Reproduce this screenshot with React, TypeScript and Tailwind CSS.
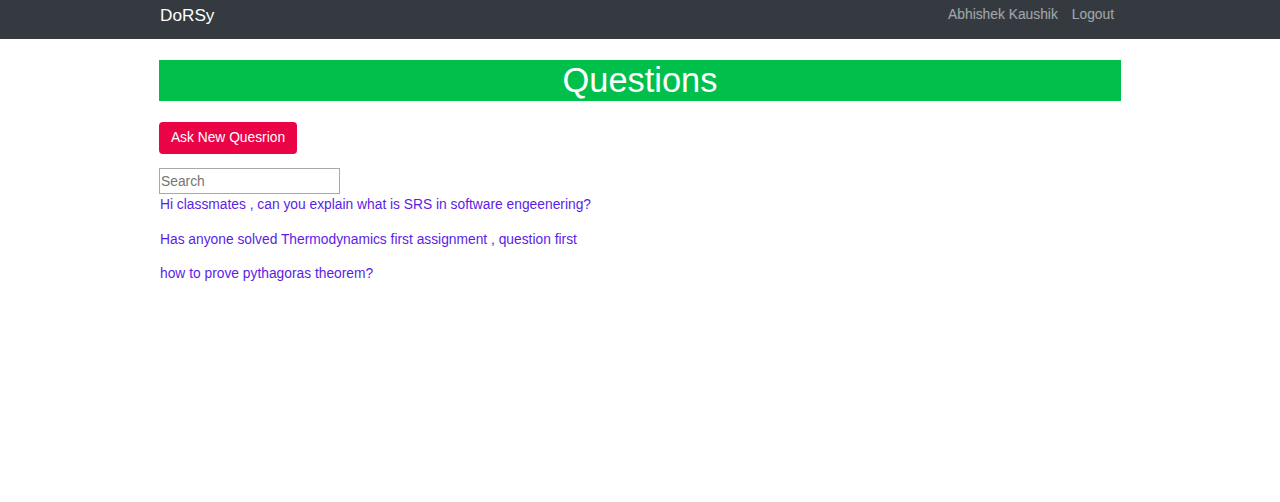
import React, { useState } from 'react';

const questions = [
  'Hi classmates , can you explain what is SRS in software engeenering?',
  'Has anyone solved Thermodynamics first assignment , question first',
  'how to prove pythagoras theorem?',
];

export default function App() {
  const [query, setQuery] = useState('');

  return (
    <div className="min-h-[502px] bg-white" style={{ fontFamily: '"Liberation Sans", Arial, sans-serif' }}>
      {/* Navbar */}
      <nav className="h-[39px] bg-[#343a40]">
        <div className="mx-auto flex h-full w-[962px] items-start justify-between pt-[6px]">
          <a href="#" className="pl-[1px] text-[17.2px] leading-[18px] text-white">DoRSy</a>
          <div className="flex items-center gap-[14px] pr-[7px] pt-[1px] text-[13.8px] leading-[16px] text-white/55">
            <a href="#">Abhishek Kaushik</a>
            <a href="#">Logout</a>
          </div>
        </div>
      </nav>

      <main className="mx-auto w-[962px] pt-[21px]">
        <div className="flex h-[41px] items-center justify-center bg-[#00c04b]">
          <h1 className="text-[34.4px] leading-none text-white">Questions</h1>
        </div>

        <button className="mt-[21px] h-[32px] w-[138px] rounded-[4px] bg-[#ea0346] text-[13.8px] text-white">
          Ask New Quesrion
        </button>

        <div className="mt-[14px]">
          <input
            value={query}
            onChange={(e) => setQuery(e.target.value)}
            placeholder="Search"
            className="block h-[26px] w-[181px] border border-[#a9a9a9] px-[1px] text-[13.8px] text-gray-800 placeholder:text-[#757575]"
          />
        </div>

        <div className="mt-[3px] flex flex-col">
          {questions
            .filter((q) => q.toLowerCase().includes(query.toLowerCase()))
            .map((q) => (
              <a key={q} href="#" className="mb-[18.5px] pl-[1px] text-[13.8px] leading-[16px] text-[#5b1de6]">
                {q}
              </a>
            ))}
        </div>
      </main>
    </div>
  );
}
